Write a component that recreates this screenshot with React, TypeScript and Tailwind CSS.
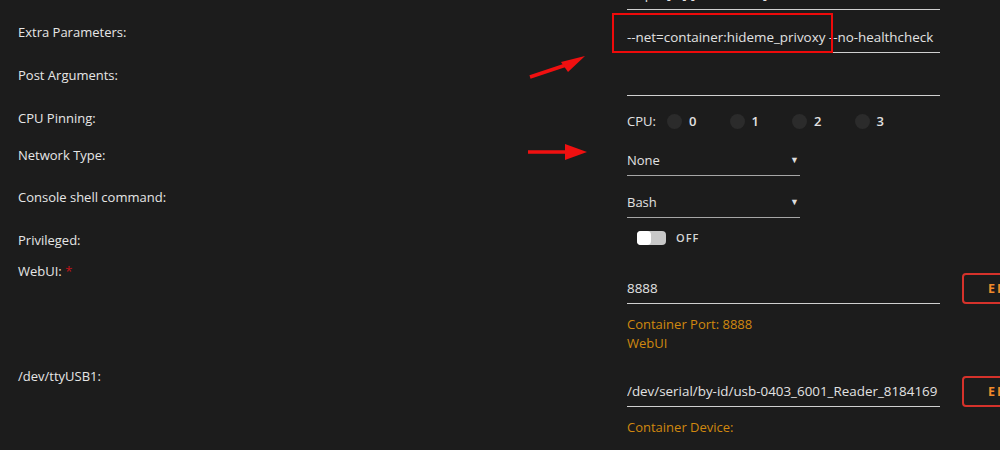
import React from 'react';

const font = { fontFamily: '"Open Sans", "Noto Sans", sans-serif' };

const Label = ({ children, pt }: { children?: React.ReactNode; pt: string }) => (
    <div className={`w-[627px] shrink-0 pl-[18px] text-[13px] leading-[18px] text-[#e6e6e6] ${pt}`}>
        {children}
    </div>
);

const TextInput = ({ value, mt = 'mt-[18px]' }: { value: string; mt?: string }) => (
    <div className={`w-[313px] overflow-hidden whitespace-nowrap border-b border-[#cfcfcf] pb-[6px] text-[13.4px] leading-[18px] text-[#e2e2e2] ${mt}`}>
        {value}
    </div>
);

const Select = ({ value }: { value: string }) => (
    <div className="mt-[17px] flex w-[173px] items-center justify-between border-b border-[#a6a6a6] pb-[6px] text-[13px] leading-[18px] text-[#e2e2e2]">
        <span>{value}</span>
        <span className="pr-[1px] text-[9px] text-[#dcdcdc]">▼</span>
    </div>
);

const EditButton = () => (
    <div className="ml-[22px] mt-[15px] h-[31px] w-[90px] shrink-0 rounded-[4px] border-2 border-[#d5322b] pl-[24px] text-[12.5px] font-bold leading-[27px] tracking-[2px] text-[#f08a2a]">
        EDIT
    </div>
);

const Hint = ({ lines }: { lines: string[] }) => (
    <div className="mt-[11px] text-[13px] leading-[19px] text-[#d0880f]">
        {lines.map((l) => (
            <div key={l}>{l}</div>
        ))}
    </div>
);

export default function App() {
    const cpus = ['0', '1', '2', '3'];

    return (
        <div className="relative h-[450px] w-[1000px] overflow-hidden bg-[#1c1c1c]" style={font}>
            <div className="-mt-[33px] flex flex-col">
                {/* row scrolled out of view */}
                <div className="flex h-[43px]">
                    <Label pt="pt-[13px]" />
                    <TextInput value="http://[IP]:[PORT:8888]/" />
                </div>

                <div className="flex h-[43px]">
                    <Label pt="pt-[13px]">Extra Parameters:</Label>
                    <TextInput value="--net=container:hideme_privoxy --no-healthcheck" />
                </div>

                <div className="flex h-[43px]">
                    <Label pt="pt-[13px]">Post Arguments:</Label>
                    <TextInput value="" mt="mt-[18px] h-[25px]" />
                </div>

                <div className="flex h-[38px]">
                    <Label pt="pt-[13px]">CPU Pinning:</Label>
                    <div className="mt-[16px] flex h-[18px] items-center text-[13px] leading-[18px] text-[#e2e2e2]">
                        <span className="w-[40px]">CPU:</span>
                        {cpus.map((c) => (
                            <div key={c} className="flex w-[62.5px] items-center gap-[7px]">
                                <span className="h-[15px] w-[15px] rounded-full bg-[#2b2b2b]" />
                                <span className="font-semibold">{c}</span>
                            </div>
                        ))}
                    </div>
                </div>

                <div className="flex h-[42px]">
                    <Label pt="pt-[12px]">Network Type:</Label>
                    <Select value="None" />
                </div>

                <div className="flex h-[42px]">
                    <Label pt="pt-[12px]">Console shell command:</Label>
                    <Select value="Bash" />
                </div>

                <div className="flex h-[40px]">
                    <Label pt="pt-[13px]">Privileged:</Label>
                    <div className="ml-[10px] mt-[13px] flex h-[14px] items-center gap-[10px]">
                        <div className="relative h-[14px] w-[29px] rounded-[4px] bg-[#c8c8c8]">
                            <div className="absolute left-0 top-0 h-[14px] w-[14px] rounded-[4px] bg-white" />
                        </div>
                        <span className="text-[11px] font-semibold leading-[14px] tracking-[1px] text-[#d6d6d6]">OFF</span>
                    </div>
                </div>

                <div className="flex pb-[8px]">
                    <Label pt="pt-[4px]">
                        WebUI: <span className="text-[#c0141a]">*</span>
                    </Label>
                    <div className="flex flex-col">
                        <TextInput value="8888" mt="mt-[21px]" />
                        <Hint lines={['Container Port: 8888', 'WebUI']} />
                    </div>
                    <EditButton />
                </div>

                <div className="flex">
                    <Label pt="pt-[6px]">/dev/ttyUSB1:</Label>
                    <div className="flex flex-col">
                        <TextInput value="/dev/serial/by-id/usb-0403_6001_Reader_8184169" mt="mt-[21px]" />
                        <Hint lines={['Container Device:']} />
                    </div>
                    <EditButton />
                </div>
            </div>

            {/* annotations drawn over the screenshot */}
            <div className="pointer-events-none absolute left-[612px] top-[13px] h-[40px] w-[221px] border-2 border-[#ee0a0a]" />
            <svg className="pointer-events-none absolute left-0 top-0" width="1000" height="450">
                <line x1="530" y1="77" x2="566" y2="65" stroke="#f01010" strokeWidth="3.5" />
                <polygon points="585,56 561,62 568,72" fill="#f01010" />
                <line x1="528" y1="152" x2="568" y2="152" stroke="#f01010" strokeWidth="3.5" />
                <polygon points="587,152 565,144 565,160" fill="#f01010" />
            </svg>
        </div>
    );
}
